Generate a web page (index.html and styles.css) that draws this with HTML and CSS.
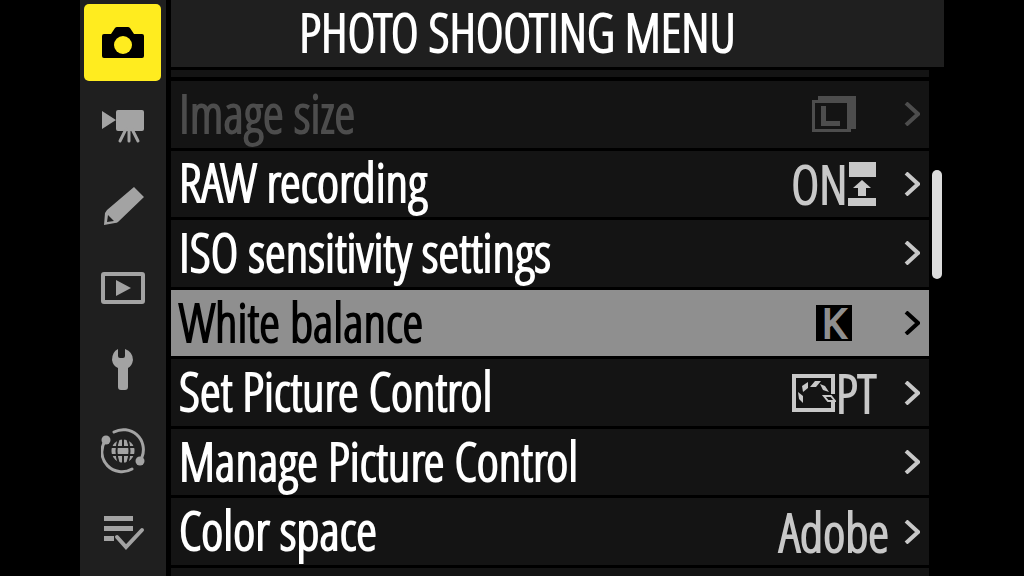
FILE: index.html
```
<!DOCTYPE html>
<html lang="en">
<head>
  <meta charset="UTF-8" />
  <meta name="viewport" content="width=device-width, initial-scale=1" />
  <title>Photo shooting menu</title>
  <link rel="stylesheet" href="styles.css">
</head>
<body>
  <div class="screen">

    <!-- menu tabs -->
    <nav class="tabs">
      <button class="tab active" aria-label="Photo shooting">
        <svg viewBox="0 0 44 50"><path fill="#000" d="M3 16h7l4-6q1-1 2-1h11q1 0 2 1l4 6h8q2 0 2 2v20q0 2-2 2H3q-2 0-2-2V18q0-2 2-2z"/><circle cx="22" cy="27" r="9" fill="#ffec1f"/></svg>
      </button>
      <button class="tab" aria-label="Video recording">
        <svg viewBox="0 0 44 50"><path d="M1 12l14 9-14 9zM17 11h24q2 0 2 2v17q0 2-2 2H17q-2 0-2-2V13q0-2 2-2z"/><path class="line" stroke-width="3" d="M25 30l-6 12M28 30v12M31 30l6 12"/></svg>
      </button>
      <button class="tab" aria-label="Custom settings">
        <svg viewBox="0 0 44 50"><path fill-rule="evenodd" d="M33 6l10 10-26 25q-1 1-3 1L3 44 4 32l2-3zM7 34l-1 7 7-1z"/></svg>
      </button>
      <button class="tab" aria-label="Playback">
        <svg viewBox="0 0 44 50"><rect class="line" x="2" y="12" width="40" height="28" rx="1" stroke-width="4"/><path d="M15 18l15 8-15 8z"/></svg>
      </button>
      <button class="tab" aria-label="Setup">
        <svg viewBox="0 0 44 50"><path d="M17 6v7q0 2 2 2h3q2 0 2-2V6q8 3 8 11-1 6-5 8v19q0 3-3 3h-4q-3 0-3-3V25q-5-2-6-8 0-8 6-11z"/></svg>
      </button>
      <button class="tab" aria-label="Network">
        <svg viewBox="0 0 44 50"><path class="line" stroke-width="3" d="M13 7A20 20 0 0 1 41 32M31 44A20 20 0 0 1 4 16"/><circle cx="5" cy="15" r="4.500"/><circle cx="39" cy="36" r="4.500"/><circle cx="22" cy="26" r="11.500"/><path class="cut" d="M9 22h26M9 30h26M22 13v9M22 30v9M18 13q-5 13 0 26M26 13q5 13 0 26"/></svg>
      </button>
      <button class="tab" aria-label="My menu">
        <svg viewBox="0 0 44 50"><path d="M3 10h29v5H3zM3 20h29v5H3zM3 30h10v5H3z"/><path class="line" stroke-width="4" d="M16 31l9 10 16-17"/></svg>
      </button>
    </nav>

    <main class="menu">
      <h1 class="title">PHOTO SHOOTING MENU</h1>
      <div class="body">
        <div class="list">
          <div class="edge edge-top"></div>
          <button class="row" disabled>
            <span class="label">Image size</span>
            <span class="value">
              <svg class="size-icon" viewBox="0 0 44 36"><path fill-rule="evenodd" d="M0 4h6V0h38v33h-5v3H0zM3 7v26h32V7z"/><path d="M9 10h5v15h14v5H9z"/></svg>
            </span>
            <svg class="arrow" viewBox="0 0 16 24"><path d="M2 1l12 11L2 23"/></svg>
          </button>
          <button class="row">
            <span class="label">RAW recording</span>
            <span class="value">ON
              <svg class="slot-icon" viewBox="0 0 28 44"><path d="M1 0h27v15H1zM0 36h28v8H0zM14 18l9 8h-5v8h-8v-8H5z"/></svg>
            </span>
            <svg class="arrow" viewBox="0 0 16 24"><path d="M2 1l12 11L2 23"/></svg>
          </button>
          <button class="row">
            <span class="label">ISO sensitivity settings</span>
            <svg class="arrow" viewBox="0 0 16 24"><path d="M2 1l12 11L2 23"/></svg>
          </button>
          <button class="row selected">
            <span class="label">White balance</span>
            <span class="value"><span class="kelvin">K</span></span>
            <svg class="arrow" viewBox="0 0 16 24"><path d="M2 1l12 11L2 23"/></svg>
          </button>
          <button class="row">
            <span class="label">Set Picture Control</span>
            <span class="value">
              <svg class="picture-icon" viewBox="0 0 44 38"><path fill="none" stroke="currentColor" stroke-width="4" d="M41 20V2H2v34h39v-8"/><path d="M6 18l5 4v7l-4-4zM10 12l6-4v6l-5 4zM18 13l5-6h6l-5 6zM28 10l5 2 4 6-6-2z"/><path fill="none" stroke="currentColor" stroke-width="2" d="M32 22h7l4 5h-7z"/></svg>PT
            </span>
            <svg class="arrow" viewBox="0 0 16 24"><path d="M2 1l12 11L2 23"/></svg>
          </button>
          <button class="row">
            <span class="label">Manage Picture Control</span>
            <svg class="arrow" viewBox="0 0 16 24"><path d="M2 1l12 11L2 23"/></svg>
          </button>
          <button class="row">
            <span class="label">Color space</span>
            <span class="value wide">Adobe</span>
            <svg class="arrow" viewBox="0 0 16 24"><path d="M2 1l12 11L2 23"/></svg>
          </button>
          <div class="edge"></div>
        </div>
        <div class="scroll"><div class="thumb"></div></div>
      </div>
    </main>

  </div>
</body>
</html>
```
FILE: styles.css
```
* {
  box-sizing: border-box;
}
body {
  margin: 0;
  background: #000;
  color: #fff;
  font-family: "Open Sans Condensed Light", "Roboto Condensed", "Open Sans", sans-serif;
  -webkit-text-stroke: 2px;
  overflow: hidden;
}
button {
  border: 0;
  padding: 0;
  font: inherit;
  color: inherit;
  cursor: pointer;
}
.screen {
  display: flex;
  gap: 5px;
  height: 100vh;
  aspect-ratio: 3 / 2;
  max-width: 100%;
  margin: 0 auto;
}

/* tabs */
.tabs {
  display: flex;
  flex-direction: column;
  gap: 4px;
  width: 86px;
  padding: 4px 5px 6px 4px;
  background: #1f1f1f;
}
.tab {
  flex: 1;
  display: flex;
  align-items: center;
  justify-content: center;
  background: none;
  border-radius: 5px;
}
.tab.active {
  background: #ffec1f;
}
.tab svg {
  width: 44px;
  height: 50px;
  fill: #a3a3a3;
}
.tab .line {
  fill: none;
  stroke: #a3a3a3;
  stroke-linecap: round;
}
.tab .cut {
  fill: none;
  stroke: #1f1f1f;
  stroke-width: 2;
}

/* menu */
.menu {
  flex: 1;
  display: flex;
  flex-direction: column;
  gap: 3px;
  min-width: 0;
}
.title {
  margin: 0;
  padding: 0 80px 3px 0;
  background: #1f1f1f;
  font-size: 53px;
  font-weight: normal;
  line-height: 64px;
  text-align: center;
  white-space: nowrap;
}
.body {
  flex: 1;
  display: flex;
  gap: 3px;
  min-height: 0;
}
.list {
  flex: 1;
  display: flex;
  flex-direction: column;
  gap: 3px;
}
.edge {
  height: 8px;
  background: #141414;
}
.edge-top {
  height: 7px;
  margin-bottom: 1px;
}
.row {
  flex: 1;
  display: flex;
  align-items: center;
  min-height: 0;
  padding: 0 9px 0 8px;
  background: #141414;
  font-size: 53px;
  line-height: 60px;
  text-align: left;
  white-space: nowrap;
}
.row:disabled {
  color: #4d4d4d;
}
.row.selected {
  background: #8f8f8f;
  color: #000;
}
.label {
  flex: 1;
  padding-bottom: 3px;
}
.value {
  display: flex;
  align-items: center;
  justify-content: center;
  width: 88px;
  margin-right: 26px;
  color: #c8c8c8;
}
.value.wide {
  width: 106px;
  margin-right: 17px;
}
.row:disabled .value {
  color: #4d4d4d;
}
.value svg {
  flex: none;
  fill: currentColor;
}
.size-icon {
  width: 44px;
  height: 36px;
}
.slot-icon {
  width: 28px;
  height: 44px;
  margin-left: 1px;
}
.picture-icon {
  width: 44px;
  height: 38px;
}
.kelvin {
  width: 36px;
  background: #000;
  color: #8f8f8f;
  font-family: "Open Sans", sans-serif;
  font-size: 40px;
  line-height: 36px;
  text-align: center;
}
.arrow {
  width: 16px;
  height: 24px;
  fill: none;
  stroke: #c8c8c8;
  stroke-width: 4;
}
.row:disabled .arrow {
  stroke: #4d4d4d;
}
.row.selected .arrow {
  stroke: #000;
}

/* scroll bar */
.scroll {
  width: 12px;
  padding-top: 100px;
}
.thumb {
  width: 10px;
  height: 109px;
  border-radius: 5px;
  background: #dcdcdc;
}
```
